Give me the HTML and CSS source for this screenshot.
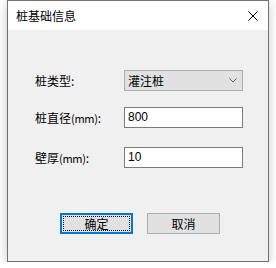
FILE: index.html
```html
<!DOCTYPE html>
<html lang="zh-CN">
<head>
    <meta charset="UTF-8">
    <title>桩基础信息</title>
    <link rel="stylesheet" href="styles.css">
</head>
<body>
<div class="window">
    <div class="titlebar">
        <span class="title">桩基础信息</span>
        <svg class="close" width="10" height="10" viewBox="0 0 10 10">
            <path d="M0.5 0.5 L9.5 9.5 M9.5 0.5 L0.5 9.5" stroke="#000" stroke-width="1"/>
        </svg>
    </div>

    <div class="content">
        <div class="form">
            <div class="row row-type">
                <label>桩类型:</label>
                <div class="combo">
                    <span>灌注桩</span>
                    <svg class="chevron" width="8" height="5" viewBox="0 0 8 5">
                        <path d="M0.5 0.5 L4 4 L7.5 0.5" fill="none" stroke="#606060" stroke-width="1"/>
                    </svg>
                </div>
            </div>
            <div class="row row-dia">
                <label>桩直径<small>(mm)</small>:</label>
                <div class="field">800</div>
            </div>
            <div class="row row-wall">
                <label>壁厚<small>(mm)</small>:</label>
                <div class="field">10</div>
            </div>
        </div>

        <div class="buttons">
            <button class="btn btn-default"><span>确定</span></button>
            <button class="btn">取消</button>
        </div>
    </div>
</div>
</body>
</html>
```

FILE: styles.css
```css
* {
    margin: 0;
    padding: 0;
    box-sizing: border-box;
}

body {
    font-family: "Noto Sans CJK SC", "Liberation Sans", sans-serif;
    font-size: 12px;
    color: #000;
    background: #fff;
}

.window {
    width: 262px;
    height: 262px;
    margin-left: 7px;
    border: 1px solid #717171;
    background: #f0f0f0;
    box-shadow: 0 2px 10px rgba(0, 0, 0, 0.22);
    display: flex;
    flex-direction: column;
}

.titlebar {
    height: 29px;
    background: #fff;
    display: flex;
    align-items: center;
    justify-content: space-between;
    padding: 0 10px 0 8px;
}

.title {
    line-height: 16px;
    margin-top: 1px;
}

.close {
    display: block;
    margin-top: 1px;
}

.content {
    padding: 40px 0 0 27px;
}

.row {
    display: flex;
    align-items: center;
    height: 21px;
}

.row label {
    width: 89px;
    line-height: 16px;
}

.row label small {
    font-size: 11px;
    letter-spacing: -0.3px;
}

.row-dia {
    margin-top: 16px;
}

.row-wall {
    margin-top: 19px;
}

.combo {
    width: 119px;
    height: 21px;
    background: #e1e1e1;
    border: 1px solid #adadad;
    display: flex;
    align-items: center;
    justify-content: space-between;
    padding: 0 5px 0 3px;
    line-height: 16px;
}

.chevron {
    display: block;
}

.field {
    width: 119px;
    height: 21px;
    background: #fff;
    border: 1px solid #7a7a7a;
    padding: 0 3px;
    line-height: 19px;
    font-family: "Liberation Sans", sans-serif;
    font-size: 12px;
}

.buttons {
    display: flex;
    gap: 14px;
    margin: 45px 0 0 25px;
}

.btn {
    width: 73px;
    height: 21px;
    background: #e1e1e1;
    border: 1px solid #adadad;
    font-family: inherit;
    font-size: 12px;
    color: #000;
    line-height: 16px;
}

.btn-default {
    border: 2px solid #0078d7;
    padding: 1px;
}

.btn-default span {
    display: block;
    height: 100%;
    border: 1px dotted #000;
    line-height: 13px;
}
```
